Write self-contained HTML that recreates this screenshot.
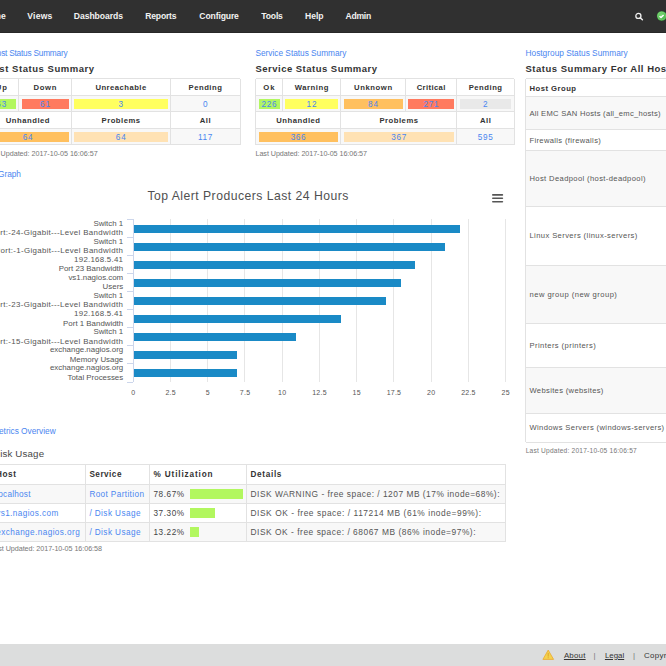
<!DOCTYPE html>
<html><head><meta charset="utf-8"><style>
html,body{margin:0;padding:0;}
body{width:666px;height:666px;overflow:hidden;position:relative;background:#fff;font-family:"Liberation Sans", sans-serif;}
.t{position:absolute;white-space:nowrap;}
.r{position:absolute;}
</style></head><body>
<div class="r" style="left:0.00px;top:0.00px;width:666.00px;height:32.80px;background:#303030;"></div>
<div class="r" style="left:0.00px;top:31.60px;width:666.00px;height:1.20px;background:#282828;"></div>
<div class="t" style="left:-54.10px;width:60px;text-align:right;top:11.89px;font-size:8.6px;line-height:8.6px;color:#f2f2f2;font-weight:bold;letter-spacing:0.159px;margin-right:-0.159px;">Home</div>
<div class="t" style="left:27.30px;top:11.89px;font-size:8.6px;line-height:8.6px;color:#f2f2f2;font-weight:bold;letter-spacing:0.195px;">Views</div>
<div class="t" style="left:73.80px;top:11.89px;font-size:8.6px;line-height:8.6px;color:#f2f2f2;font-weight:bold;letter-spacing:-0.052px;">Dashboards</div>
<div class="t" style="left:145.20px;top:11.89px;font-size:8.6px;line-height:8.6px;color:#f2f2f2;font-weight:bold;letter-spacing:-0.181px;">Reports</div>
<div class="t" style="left:199.30px;top:11.89px;font-size:8.6px;line-height:8.6px;color:#f2f2f2;font-weight:bold;letter-spacing:-0.122px;">Configure</div>
<div class="t" style="left:261.30px;top:11.89px;font-size:8.6px;line-height:8.6px;color:#f2f2f2;font-weight:bold;letter-spacing:-0.170px;">Tools</div>
<div class="t" style="left:305.00px;top:11.89px;font-size:8.6px;line-height:8.6px;color:#f2f2f2;font-weight:bold;letter-spacing:-0.042px;">Help</div>
<div class="t" style="left:345.60px;top:11.89px;font-size:8.6px;line-height:8.6px;color:#f2f2f2;font-weight:bold;letter-spacing:-0.284px;">Admin</div>
<svg class="r" style="left:634px;top:12px" width="10" height="10" viewBox="0 0 10 10"><circle cx="4.4" cy="3.9" r="2.55" fill="none" stroke="#f0f0f0" stroke-width="1.3"/><line x1="6.2" y1="5.8" x2="8.4" y2="7.7" stroke="#f0f0f0" stroke-width="1.5" stroke-linecap="round"/></svg>
<svg class="r" style="left:656px;top:11px" width="11" height="11" viewBox="0 0 11 11"><defs><radialGradient id="gg" cx="0.45" cy="0.4" r="0.6"><stop offset="0" stop-color="#7edc78"/><stop offset="1" stop-color="#3fa83f"/></radialGradient></defs><circle cx="5.7" cy="5" r="4.8" fill="url(#gg)"/><circle cx="5.7" cy="5" r="3.9" fill="none" stroke="#a6eaa0" stroke-width="0.5" opacity="0.7"/><polyline points="3.5,5.2 5,6.5 7.6,4" fill="none" stroke="#fff" stroke-width="1.4"/></svg>
<div class="t" style="left:-52.60px;width:120px;text-align:right;top:48.84px;font-size:8.3px;line-height:8.3px;color:#4a86f0;letter-spacing:-0.224px;margin-right:0.224px;">Host Status Summary</div>
<div class="t" style="left:255.50px;top:48.84px;font-size:8.3px;line-height:8.3px;color:#4a86f0;letter-spacing:-0.014px;">Service Status Summary</div>
<div class="t" style="left:525.50px;top:48.84px;font-size:8.3px;line-height:8.3px;color:#4a86f0;letter-spacing:0.012px;">Hostgroup Status Summary</div>
<div class="t" style="left:-45.30px;width:140px;text-align:right;top:63.92px;font-size:9.5px;line-height:9.5px;color:#333;font-weight:bold;letter-spacing:0.549px;margin-right:-0.549px;">Host Status Summary</div>
<div class="t" style="left:255.50px;top:63.92px;font-size:9.5px;line-height:9.5px;color:#333;font-weight:bold;letter-spacing:0.480px;">Service Status Summary</div>
<div class="t" style="left:525.50px;top:63.92px;font-size:9.5px;line-height:9.5px;color:#333;font-weight:bold;letter-spacing:0.508px;">Status Summary For All Host Groups</div>
<div class="r" style="left:-16.00px;top:95.00px;width:256.10px;height:16.60px;background:#f8f8f8;"></div>
<div class="r" style="left:-16.00px;top:128.20px;width:256.10px;height:16.60px;background:#f8f8f8;"></div>
<div class="r" style="left:-16.00px;top:78.20px;width:256.10px;height:1.00px;background:#e2e2e2;"></div>
<div class="r" style="left:-16.00px;top:94.50px;width:256.10px;height:1.00px;background:#e2e2e2;"></div>
<div class="r" style="left:-16.00px;top:111.10px;width:256.10px;height:1.00px;background:#e2e2e2;"></div>
<div class="r" style="left:-16.00px;top:127.70px;width:256.10px;height:1.00px;background:#e2e2e2;"></div>
<div class="r" style="left:-16.00px;top:144.30px;width:256.10px;height:1.00px;background:#e2e2e2;"></div>
<div class="r" style="left:-16.50px;top:78.70px;width:1.00px;height:66.10px;background:#e2e2e2;"></div>
<div class="r" style="left:239.60px;top:78.70px;width:1.00px;height:66.10px;background:#e2e2e2;"></div>
<div class="t" style="left:-16.00px;width:34.60px;text-align:center;top:84.05px;font-size:7.7px;line-height:7.7px;color:#333;font-weight:bold;letter-spacing:1.025px;text-indent:1.025px;">Up</div>
<div class="r" style="left:18.10px;top:78.70px;width:1.00px;height:32.90px;background:#e2e2e2;"></div>
<div class="t" style="left:18.60px;width:52.70px;text-align:center;top:84.05px;font-size:7.7px;line-height:7.7px;color:#333;font-weight:bold;letter-spacing:0.698px;text-indent:0.698px;">Down</div>
<div class="r" style="left:70.80px;top:78.70px;width:1.00px;height:32.90px;background:#e2e2e2;"></div>
<div class="t" style="left:71.30px;width:99.00px;text-align:center;top:84.05px;font-size:7.7px;line-height:7.7px;color:#333;font-weight:bold;letter-spacing:0.462px;text-indent:0.462px;">Unreachable</div>
<div class="r" style="left:169.80px;top:78.70px;width:1.00px;height:32.90px;background:#e2e2e2;"></div>
<div class="t" style="left:170.30px;width:69.80px;text-align:center;top:84.05px;font-size:7.7px;line-height:7.7px;color:#333;font-weight:bold;letter-spacing:0.505px;text-indent:0.505px;">Pending</div>
<div class="r" style="left:-13.00px;top:98.60px;width:29.00px;height:10.10px;background:#b2f75f;"></div>
<div class="t" style="left:-16.00px;width:34.60px;text-align:center;top:101.13px;font-size:8.2px;line-height:8.2px;color:#4a86f0;letter-spacing:0.911px;text-indent:0.911px;">63</div>
<div class="r" style="left:21.60px;top:98.60px;width:47.10px;height:10.10px;background:#ff7a5f;"></div>
<div class="t" style="left:18.60px;width:52.70px;text-align:center;top:101.13px;font-size:8.2px;line-height:8.2px;color:#4a86f0;letter-spacing:0.911px;text-indent:0.911px;">61</div>
<div class="r" style="left:74.30px;top:98.60px;width:93.40px;height:10.10px;background:#ffff5f;"></div>
<div class="t" style="left:71.30px;width:99.00px;text-align:center;top:101.13px;font-size:8.2px;line-height:8.2px;color:#4a86f0;">3</div>
<div class="t" style="left:170.30px;width:69.80px;text-align:center;top:101.13px;font-size:8.2px;line-height:8.2px;color:#4a86f0;">0</div>
<div class="t" style="left:-16.00px;width:87.30px;text-align:center;top:116.95px;font-size:7.7px;line-height:7.7px;color:#333;font-weight:bold;letter-spacing:0.496px;text-indent:0.496px;">Unhandled</div>
<div class="r" style="left:70.80px;top:111.60px;width:1.00px;height:33.20px;background:#e2e2e2;"></div>
<div class="t" style="left:71.30px;width:99.00px;text-align:center;top:116.95px;font-size:7.7px;line-height:7.7px;color:#333;font-weight:bold;letter-spacing:0.501px;text-indent:0.501px;">Problems</div>
<div class="r" style="left:169.80px;top:111.60px;width:1.00px;height:33.20px;background:#e2e2e2;"></div>
<div class="t" style="left:170.30px;width:69.80px;text-align:center;top:116.95px;font-size:7.7px;line-height:7.7px;color:#333;font-weight:bold;letter-spacing:0.491px;text-indent:0.491px;">All</div>
<div class="r" style="left:-13.00px;top:131.70px;width:81.70px;height:10.20px;background:#ffc05f;"></div>
<div class="t" style="left:-16.00px;width:87.30px;text-align:center;top:134.13px;font-size:8.2px;line-height:8.2px;color:#4a86f0;letter-spacing:0.911px;text-indent:0.911px;">64</div>
<div class="r" style="left:74.30px;top:131.70px;width:93.40px;height:10.20px;background:#ffe2b4;"></div>
<div class="t" style="left:71.30px;width:99.00px;text-align:center;top:134.13px;font-size:8.2px;line-height:8.2px;color:#4a86f0;letter-spacing:0.911px;text-indent:0.911px;">64</div>
<div class="t" style="left:170.30px;width:69.80px;text-align:center;top:134.13px;font-size:8.2px;line-height:8.2px;color:#4a86f0;letter-spacing:0.653px;text-indent:0.653px;">117</div>
<div class="r" style="left:255.50px;top:95.00px;width:258.60px;height:16.60px;background:#f8f8f8;"></div>
<div class="r" style="left:255.50px;top:128.20px;width:258.60px;height:16.60px;background:#f8f8f8;"></div>
<div class="r" style="left:255.50px;top:78.20px;width:258.60px;height:1.00px;background:#e2e2e2;"></div>
<div class="r" style="left:255.50px;top:94.50px;width:258.60px;height:1.00px;background:#e2e2e2;"></div>
<div class="r" style="left:255.50px;top:111.10px;width:258.60px;height:1.00px;background:#e2e2e2;"></div>
<div class="r" style="left:255.50px;top:127.70px;width:258.60px;height:1.00px;background:#e2e2e2;"></div>
<div class="r" style="left:255.50px;top:144.30px;width:258.60px;height:1.00px;background:#e2e2e2;"></div>
<div class="r" style="left:255.00px;top:78.70px;width:1.00px;height:66.10px;background:#e2e2e2;"></div>
<div class="r" style="left:513.60px;top:78.70px;width:1.00px;height:66.10px;background:#e2e2e2;"></div>
<div class="t" style="left:255.50px;width:26.90px;text-align:center;top:84.05px;font-size:7.7px;line-height:7.7px;color:#333;font-weight:bold;letter-spacing:1.027px;text-indent:1.027px;">Ok</div>
<div class="r" style="left:281.90px;top:78.70px;width:1.00px;height:32.90px;background:#e2e2e2;"></div>
<div class="t" style="left:282.40px;width:58.40px;text-align:center;top:84.05px;font-size:7.7px;line-height:7.7px;color:#333;font-weight:bold;letter-spacing:0.508px;text-indent:0.508px;">Warning</div>
<div class="r" style="left:340.30px;top:78.70px;width:1.00px;height:32.90px;background:#e2e2e2;"></div>
<div class="t" style="left:340.80px;width:64.60px;text-align:center;top:84.05px;font-size:7.7px;line-height:7.7px;color:#333;font-weight:bold;letter-spacing:0.577px;text-indent:0.577px;">Unknown</div>
<div class="r" style="left:404.90px;top:78.70px;width:1.00px;height:32.90px;background:#e2e2e2;"></div>
<div class="t" style="left:405.40px;width:51.30px;text-align:center;top:84.05px;font-size:7.7px;line-height:7.7px;color:#333;font-weight:bold;letter-spacing:0.372px;text-indent:0.372px;">Critical</div>
<div class="r" style="left:456.20px;top:78.70px;width:1.00px;height:32.90px;background:#e2e2e2;"></div>
<div class="t" style="left:456.70px;width:57.40px;text-align:center;top:84.05px;font-size:7.7px;line-height:7.7px;color:#333;font-weight:bold;letter-spacing:0.505px;text-indent:0.505px;">Pending</div>
<div class="r" style="left:258.50px;top:98.60px;width:21.30px;height:10.10px;background:#b2f75f;"></div>
<div class="t" style="left:255.50px;width:26.90px;text-align:center;top:101.13px;font-size:8.2px;line-height:8.2px;color:#4a86f0;letter-spacing:0.684px;text-indent:0.684px;">226</div>
<div class="r" style="left:285.40px;top:98.60px;width:52.80px;height:10.10px;background:#ffff5f;"></div>
<div class="t" style="left:282.40px;width:58.40px;text-align:center;top:101.13px;font-size:8.2px;line-height:8.2px;color:#4a86f0;letter-spacing:0.911px;text-indent:0.911px;">12</div>
<div class="r" style="left:343.80px;top:98.60px;width:59.00px;height:10.10px;background:#ffc05f;"></div>
<div class="t" style="left:340.80px;width:64.60px;text-align:center;top:101.13px;font-size:8.2px;line-height:8.2px;color:#4a86f0;letter-spacing:0.911px;text-indent:0.911px;">84</div>
<div class="r" style="left:408.40px;top:98.60px;width:45.70px;height:10.10px;background:#ff7a5f;"></div>
<div class="t" style="left:405.40px;width:51.30px;text-align:center;top:101.13px;font-size:8.2px;line-height:8.2px;color:#4a86f0;letter-spacing:0.684px;text-indent:0.684px;">271</div>
<div class="r" style="left:459.70px;top:98.60px;width:51.80px;height:10.10px;background:#e9e9e9;"></div>
<div class="t" style="left:456.70px;width:57.40px;text-align:center;top:101.13px;font-size:8.2px;line-height:8.2px;color:#4a86f0;">2</div>
<div class="t" style="left:255.50px;width:85.30px;text-align:center;top:116.95px;font-size:7.7px;line-height:7.7px;color:#333;font-weight:bold;letter-spacing:0.496px;text-indent:0.496px;">Unhandled</div>
<div class="r" style="left:340.30px;top:111.60px;width:1.00px;height:33.20px;background:#e2e2e2;"></div>
<div class="t" style="left:340.80px;width:115.90px;text-align:center;top:116.95px;font-size:7.7px;line-height:7.7px;color:#333;font-weight:bold;letter-spacing:0.501px;text-indent:0.501px;">Problems</div>
<div class="r" style="left:456.20px;top:111.60px;width:1.00px;height:33.20px;background:#e2e2e2;"></div>
<div class="t" style="left:456.70px;width:57.40px;text-align:center;top:116.95px;font-size:7.7px;line-height:7.7px;color:#333;font-weight:bold;letter-spacing:0.491px;text-indent:0.491px;">All</div>
<div class="r" style="left:258.50px;top:131.70px;width:79.70px;height:10.20px;background:#ffc05f;"></div>
<div class="t" style="left:255.50px;width:85.30px;text-align:center;top:134.13px;font-size:8.2px;line-height:8.2px;color:#4a86f0;letter-spacing:0.684px;text-indent:0.684px;">366</div>
<div class="r" style="left:343.80px;top:131.70px;width:110.30px;height:10.20px;background:#ffe2b4;"></div>
<div class="t" style="left:340.80px;width:115.90px;text-align:center;top:134.13px;font-size:8.2px;line-height:8.2px;color:#4a86f0;letter-spacing:0.684px;text-indent:0.684px;">367</div>
<div class="t" style="left:456.70px;width:57.40px;text-align:center;top:134.13px;font-size:8.2px;line-height:8.2px;color:#4a86f0;letter-spacing:0.684px;text-indent:0.684px;">595</div>
<div class="t" style="left:-42.40px;width:140px;text-align:right;top:149.78px;font-size:7.2px;line-height:7.2px;color:#777;letter-spacing:-0.031px;margin-right:0.031px;">Last Updated: 2017-10-05 16:06:57</div>
<div class="t" style="left:255.50px;top:149.78px;font-size:7.2px;line-height:7.2px;color:#777;letter-spacing:-0.062px;">Last Updated: 2017-10-05 16:06:57</div>
<div class="r" style="left:525.50px;top:96.30px;width:154.50px;height:33.30px;background:#f8f8f8;"></div>
<div class="r" style="left:525.50px;top:150.20px;width:154.50px;height:55.90px;background:#f8f8f8;"></div>
<div class="r" style="left:525.50px;top:265.00px;width:154.50px;height:58.90px;background:#f8f8f8;"></div>
<div class="r" style="left:525.50px;top:367.00px;width:154.50px;height:46.20px;background:#f8f8f8;"></div>
<div class="r" style="left:525.50px;top:78.20px;width:154.50px;height:1.00px;background:#e2e2e2;"></div>
<div class="r" style="left:525.50px;top:95.80px;width:154.50px;height:1.00px;background:#e2e2e2;"></div>
<div class="r" style="left:525.50px;top:129.10px;width:154.50px;height:1.00px;background:#e2e2e2;"></div>
<div class="r" style="left:525.50px;top:149.70px;width:154.50px;height:1.00px;background:#e2e2e2;"></div>
<div class="r" style="left:525.50px;top:205.60px;width:154.50px;height:1.00px;background:#e2e2e2;"></div>
<div class="r" style="left:525.50px;top:264.50px;width:154.50px;height:1.00px;background:#e2e2e2;"></div>
<div class="r" style="left:525.50px;top:323.40px;width:154.50px;height:1.00px;background:#e2e2e2;"></div>
<div class="r" style="left:525.50px;top:366.50px;width:154.50px;height:1.00px;background:#e2e2e2;"></div>
<div class="r" style="left:525.50px;top:412.70px;width:154.50px;height:1.00px;background:#e2e2e2;"></div>
<div class="r" style="left:525.50px;top:441.80px;width:154.50px;height:1.00px;background:#e2e2e2;"></div>
<div class="r" style="left:525.00px;top:78.70px;width:1.00px;height:363.60px;background:#e2e2e2;"></div>
<div class="t" style="left:529.50px;top:84.66px;font-size:7.7px;line-height:7.7px;color:#333;font-weight:bold;letter-spacing:0.470px;">Host Group</div>
<div class="t" style="left:529.50px;top:109.69px;font-size:7.6px;line-height:7.6px;color:#555;letter-spacing:0.269px;">All EMC SAN Hosts (all_emc_hosts)</div>
<div class="t" style="left:529.50px;top:136.64px;font-size:7.6px;line-height:7.6px;color:#555;letter-spacing:0.337px;">Firewalls (firewalls)</div>
<div class="t" style="left:529.50px;top:174.89px;font-size:7.6px;line-height:7.6px;color:#555;letter-spacing:0.373px;">Host Deadpool (host-deadpool)</div>
<div class="t" style="left:529.50px;top:232.29px;font-size:7.6px;line-height:7.6px;color:#555;letter-spacing:0.399px;">Linux Servers (linux-servers)</div>
<div class="t" style="left:529.50px;top:291.19px;font-size:7.6px;line-height:7.6px;color:#555;letter-spacing:0.465px;">new group (new group)</div>
<div class="t" style="left:529.50px;top:342.19px;font-size:7.6px;line-height:7.6px;color:#555;letter-spacing:0.425px;">Printers (printers)</div>
<div class="t" style="left:529.50px;top:386.84px;font-size:7.6px;line-height:7.6px;color:#555;letter-spacing:0.338px;">Websites (websites)</div>
<div class="t" style="left:529.50px;top:424.49px;font-size:7.6px;line-height:7.6px;color:#555;letter-spacing:0.369px;">Windows Servers (windows-servers)</div>
<div class="t" style="left:525.70px;top:447.59px;font-size:6.6px;line-height:6.6px;color:#777;letter-spacing:0.215px;">Last Updated: 2017-10-05 16:06:57</div>
<div class="t" style="left:-79.00px;width:100px;text-align:right;top:169.84px;font-size:8.3px;line-height:8.3px;color:#4a86f0;">Performance Graph</div>
<div class="t" style="left:147.40px;top:189.83px;font-size:12.2px;line-height:12.2px;color:#505050;letter-spacing:0.480px;">Top Alert Producers Last 24 Hours</div>
<svg class="r" style="left:490px;top:192px" width="16" height="13" viewBox="0 0 16 13"><g stroke="#555" stroke-width="1.6" stroke-linecap="round"><line x1="2.8" y1="2.9" x2="12.4" y2="2.9"/><line x1="2.8" y1="6.3" x2="12.4" y2="6.3"/><line x1="2.8" y1="9.8" x2="12.4" y2="9.8"/></g></svg>
<div class="r" style="left:170.03px;top:219.00px;width:1.00px;height:163.00px;background:#e6e6e6;"></div>
<div class="r" style="left:207.25px;top:219.00px;width:1.00px;height:163.00px;background:#e6e6e6;"></div>
<div class="r" style="left:244.48px;top:219.00px;width:1.00px;height:163.00px;background:#e6e6e6;"></div>
<div class="r" style="left:281.70px;top:219.00px;width:1.00px;height:163.00px;background:#e6e6e6;"></div>
<div class="r" style="left:318.93px;top:219.00px;width:1.00px;height:163.00px;background:#e6e6e6;"></div>
<div class="r" style="left:356.15px;top:219.00px;width:1.00px;height:163.00px;background:#e6e6e6;"></div>
<div class="r" style="left:393.38px;top:219.00px;width:1.00px;height:163.00px;background:#e6e6e6;"></div>
<div class="r" style="left:430.60px;top:219.00px;width:1.00px;height:163.00px;background:#e6e6e6;"></div>
<div class="r" style="left:467.83px;top:219.00px;width:1.00px;height:163.00px;background:#e6e6e6;"></div>
<div class="r" style="left:505.05px;top:219.00px;width:1.00px;height:163.00px;background:#e6e6e6;"></div>
<div class="r" style="left:132.80px;top:219.00px;width:1.00px;height:163.00px;background:#ccd6eb;"></div>
<div class="r" style="left:127.30px;top:219.00px;width:6.00px;height:1.00px;background:#ccd6eb;"></div>
<div class="r" style="left:127.30px;top:237.06px;width:6.00px;height:1.00px;background:#ccd6eb;"></div>
<div class="r" style="left:127.30px;top:255.12px;width:6.00px;height:1.00px;background:#ccd6eb;"></div>
<div class="r" style="left:127.30px;top:273.18px;width:6.00px;height:1.00px;background:#ccd6eb;"></div>
<div class="r" style="left:127.30px;top:291.24px;width:6.00px;height:1.00px;background:#ccd6eb;"></div>
<div class="r" style="left:127.30px;top:309.30px;width:6.00px;height:1.00px;background:#ccd6eb;"></div>
<div class="r" style="left:127.30px;top:327.36px;width:6.00px;height:1.00px;background:#ccd6eb;"></div>
<div class="r" style="left:127.30px;top:345.42px;width:6.00px;height:1.00px;background:#ccd6eb;"></div>
<div class="r" style="left:127.30px;top:363.48px;width:6.00px;height:1.00px;background:#ccd6eb;"></div>
<div class="r" style="left:127.30px;top:381.54px;width:6.00px;height:1.00px;background:#ccd6eb;"></div>
<div class="r" style="left:133.80px;top:224.53px;width:326.28px;height:8.00px;background:#1a8ac6;"></div>
<div class="t" style="left:-76.80px;width:200px;text-align:right;top:219.91px;font-size:7.9px;line-height:7.9px;color:#555;">Switch 1</div>
<div class="t" style="left:-76.80px;width:200px;text-align:right;top:229.22px;font-size:7.9px;line-height:7.9px;color:#555;letter-spacing:0.349px;margin-right:-0.349px;">Port:-24-Gigabit---Level Bandwidth</div>
<div class="r" style="left:133.80px;top:242.59px;width:311.39px;height:8.00px;background:#1a8ac6;"></div>
<div class="t" style="left:-76.80px;width:200px;text-align:right;top:237.97px;font-size:7.9px;line-height:7.9px;color:#555;">Switch 1</div>
<div class="t" style="left:-76.80px;width:200px;text-align:right;top:247.28px;font-size:7.9px;line-height:7.9px;color:#555;letter-spacing:0.340px;margin-right:-0.340px;">Port:-1-Gigabit---Level Bandwidth</div>
<div class="r" style="left:133.80px;top:260.65px;width:281.61px;height:8.00px;background:#1a8ac6;"></div>
<div class="t" style="left:-76.80px;width:200px;text-align:right;top:256.04px;font-size:7.9px;line-height:7.9px;color:#555;letter-spacing:0.251px;margin-right:-0.251px;">192.168.5.41</div>
<div class="t" style="left:-76.80px;width:200px;text-align:right;top:265.33px;font-size:7.9px;line-height:7.9px;color:#555;">Port 23 Bandwidth</div>
<div class="r" style="left:133.80px;top:278.71px;width:266.72px;height:8.00px;background:#1a8ac6;"></div>
<div class="t" style="left:-76.80px;width:200px;text-align:right;top:274.10px;font-size:7.9px;line-height:7.9px;color:#555;">vs1.nagios.com</div>
<div class="t" style="left:-76.80px;width:200px;text-align:right;top:283.39px;font-size:7.9px;line-height:7.9px;color:#555;">Users</div>
<div class="r" style="left:133.80px;top:296.77px;width:251.83px;height:8.00px;background:#1a8ac6;"></div>
<div class="t" style="left:-76.80px;width:200px;text-align:right;top:292.16px;font-size:7.9px;line-height:7.9px;color:#555;">Switch 1</div>
<div class="t" style="left:-76.80px;width:200px;text-align:right;top:301.45px;font-size:7.9px;line-height:7.9px;color:#555;letter-spacing:0.349px;margin-right:-0.349px;">Port:-23-Gigabit---Level Bandwidth</div>
<div class="r" style="left:133.80px;top:314.83px;width:207.16px;height:8.00px;background:#1a8ac6;"></div>
<div class="t" style="left:-76.80px;width:200px;text-align:right;top:310.22px;font-size:7.9px;line-height:7.9px;color:#555;letter-spacing:0.251px;margin-right:-0.251px;">192.168.5.41</div>
<div class="t" style="left:-76.80px;width:200px;text-align:right;top:319.51px;font-size:7.9px;line-height:7.9px;color:#555;">Port 1 Bandwidth</div>
<div class="r" style="left:133.80px;top:332.89px;width:162.49px;height:8.00px;background:#1a8ac6;"></div>
<div class="t" style="left:-76.80px;width:200px;text-align:right;top:328.28px;font-size:7.9px;line-height:7.9px;color:#555;">Switch 1</div>
<div class="t" style="left:-76.80px;width:200px;text-align:right;top:337.57px;font-size:7.9px;line-height:7.9px;color:#555;letter-spacing:0.349px;margin-right:-0.349px;">Port:-15-Gigabit---Level Bandwidth</div>
<div class="r" style="left:133.80px;top:350.95px;width:102.93px;height:8.00px;background:#1a8ac6;"></div>
<div class="t" style="left:-76.80px;width:200px;text-align:right;top:346.33px;font-size:7.9px;line-height:7.9px;color:#555;">exchange.nagios.org</div>
<div class="t" style="left:-76.80px;width:200px;text-align:right;top:355.63px;font-size:7.9px;line-height:7.9px;color:#555;">Memory Usage</div>
<div class="r" style="left:133.80px;top:369.01px;width:102.93px;height:8.00px;background:#1a8ac6;"></div>
<div class="t" style="left:-76.80px;width:200px;text-align:right;top:364.40px;font-size:7.9px;line-height:7.9px;color:#555;">exchange.nagios.org</div>
<div class="t" style="left:-76.80px;width:200px;text-align:right;top:373.69px;font-size:7.9px;line-height:7.9px;color:#555;">Total Processes</div>
<div class="t" style="left:113.30px;width:40.00px;text-align:center;top:389.25px;font-size:7px;line-height:7px;color:#555;">0</div>
<div class="t" style="left:150.53px;width:40.00px;text-align:center;top:389.25px;font-size:7px;line-height:7px;color:#555;letter-spacing:0.243px;text-indent:0.243px;">2.5</div>
<div class="t" style="left:187.75px;width:40.00px;text-align:center;top:389.25px;font-size:7px;line-height:7px;color:#555;">5</div>
<div class="t" style="left:224.98px;width:40.00px;text-align:center;top:389.25px;font-size:7px;line-height:7px;color:#555;letter-spacing:0.243px;text-indent:0.243px;">7.5</div>
<div class="t" style="left:262.20px;width:40.00px;text-align:center;top:389.25px;font-size:7px;line-height:7px;color:#555;letter-spacing:0.390px;text-indent:0.390px;">10</div>
<div class="t" style="left:299.43px;width:40.00px;text-align:center;top:389.25px;font-size:7px;line-height:7px;color:#555;letter-spacing:0.227px;text-indent:0.227px;">12.5</div>
<div class="t" style="left:336.65px;width:40.00px;text-align:center;top:389.25px;font-size:7px;line-height:7px;color:#555;letter-spacing:0.390px;text-indent:0.390px;">15</div>
<div class="t" style="left:373.88px;width:40.00px;text-align:center;top:389.25px;font-size:7px;line-height:7px;color:#555;letter-spacing:0.227px;text-indent:0.227px;">17.5</div>
<div class="t" style="left:411.10px;width:40.00px;text-align:center;top:389.25px;font-size:7px;line-height:7px;color:#555;letter-spacing:0.390px;text-indent:0.390px;">20</div>
<div class="t" style="left:448.33px;width:40.00px;text-align:center;top:389.25px;font-size:7px;line-height:7px;color:#555;letter-spacing:0.227px;text-indent:0.227px;">22.5</div>
<div class="t" style="left:485.55px;width:40.00px;text-align:center;top:389.25px;font-size:7px;line-height:7px;color:#555;letter-spacing:0.390px;text-indent:0.390px;">25</div>
<div class="t" style="left:-44.30px;width:100px;text-align:right;top:427.44px;font-size:8.3px;line-height:8.3px;color:#4a86f0;">Metrics Overview</div>
<div class="t" style="left:-55.80px;width:100px;text-align:right;top:449.25px;font-size:9.7px;line-height:9.7px;color:#484848;letter-spacing:0.163px;margin-right:-0.163px;">Disk Usage</div>
<div class="r" style="left:-20.00px;top:484.20px;width:525.70px;height:19.30px;background:#f8f8f8;"></div>
<div class="r" style="left:-20.00px;top:522.40px;width:525.70px;height:18.90px;background:#f8f8f8;"></div>
<div class="r" style="left:-20.00px;top:464.00px;width:525.70px;height:1.00px;background:#e2e2e2;"></div>
<div class="r" style="left:-20.00px;top:483.70px;width:525.70px;height:1.00px;background:#e2e2e2;"></div>
<div class="r" style="left:-20.00px;top:503.00px;width:525.70px;height:1.00px;background:#e2e2e2;"></div>
<div class="r" style="left:-20.00px;top:521.90px;width:525.70px;height:1.00px;background:#e2e2e2;"></div>
<div class="r" style="left:-20.00px;top:540.80px;width:525.70px;height:1.00px;background:#e2e2e2;"></div>
<div class="r" style="left:84.80px;top:464.50px;width:1.00px;height:76.80px;background:#e2e2e2;"></div>
<div class="r" style="left:149.20px;top:464.50px;width:1.00px;height:76.80px;background:#e2e2e2;"></div>
<div class="r" style="left:245.70px;top:464.50px;width:1.00px;height:76.80px;background:#e2e2e2;"></div>
<div class="r" style="left:505.20px;top:464.50px;width:1.00px;height:76.80px;background:#e2e2e2;"></div>
<div class="t" style="left:-43.40px;width:60px;text-align:right;top:471.43px;font-size:8.2px;line-height:8.2px;color:#333;font-weight:bold;letter-spacing:0.607px;margin-right:-0.607px;">Host</div>
<div class="t" style="left:89.40px;top:471.43px;font-size:8.2px;line-height:8.2px;color:#333;font-weight:bold;letter-spacing:0.486px;">Service</div>
<div class="t" style="left:153.50px;top:471.43px;font-size:8.2px;line-height:8.2px;color:#333;font-weight:bold;letter-spacing:0.861px;">% Utilization</div>
<div class="t" style="left:250.50px;top:471.43px;font-size:8.2px;line-height:8.2px;color:#333;font-weight:bold;letter-spacing:0.671px;">Details</div>
<div class="t" style="left:-3.80px;top:491.08px;font-size:8.2px;line-height:8.2px;color:#4a86f0;letter-spacing:0.246px;">localhost</div>
<div class="t" style="left:89.40px;top:491.08px;font-size:8.2px;line-height:8.2px;color:#4a86f0;letter-spacing:0.382px;">Root Partition</div>
<div class="t" style="left:153.50px;top:491.08px;font-size:8.2px;line-height:8.2px;color:#444;letter-spacing:0.556px;">78.67%</div>
<div class="r" style="left:190.30px;top:488.85px;width:52.70px;height:10.00px;background:#b2f75f;"></div>
<div class="t" style="left:250.50px;top:490.11px;font-size:8.4px;line-height:8.4px;color:#555;letter-spacing:0.502px;">DISK WARNING - free space: / 1207 MB (17% inode=68%):</div>
<div class="t" style="left:-3.80px;top:510.18px;font-size:8.2px;line-height:8.2px;color:#4a86f0;letter-spacing:0.393px;">vs1.nagios.com</div>
<div class="t" style="left:89.40px;top:510.18px;font-size:8.2px;line-height:8.2px;color:#4a86f0;letter-spacing:0.422px;">/ Disk Usage</div>
<div class="t" style="left:153.50px;top:510.18px;font-size:8.2px;line-height:8.2px;color:#444;letter-spacing:0.556px;">37.30%</div>
<div class="r" style="left:190.30px;top:507.95px;width:24.80px;height:10.00px;background:#b2f75f;"></div>
<div class="t" style="left:250.50px;top:509.21px;font-size:8.4px;line-height:8.4px;color:#555;letter-spacing:0.551px;">DISK OK - free space: / 117214 MB (61% inode=99%):</div>
<div class="t" style="left:-3.80px;top:529.08px;font-size:8.2px;line-height:8.2px;color:#4a86f0;letter-spacing:0.415px;">exchange.nagios.org</div>
<div class="t" style="left:89.40px;top:529.08px;font-size:8.2px;line-height:8.2px;color:#4a86f0;letter-spacing:0.422px;">/ Disk Usage</div>
<div class="t" style="left:153.50px;top:529.08px;font-size:8.2px;line-height:8.2px;color:#444;letter-spacing:0.556px;">13.22%</div>
<div class="r" style="left:190.30px;top:526.85px;width:8.60px;height:10.00px;background:#b2f75f;"></div>
<div class="t" style="left:250.50px;top:528.11px;font-size:8.4px;line-height:8.4px;color:#555;letter-spacing:0.532px;">DISK OK - free space: / 68067 MB (86% inode=97%):</div>
<div class="t" style="left:-38.10px;width:140px;text-align:right;top:545.38px;font-size:7.2px;line-height:7.2px;color:#777;letter-spacing:-0.062px;margin-right:0.062px;">Last Updated: 2017-10-05 16:06:58</div>
<div class="r" style="left:0.00px;top:643.50px;width:666.00px;height:22.50px;background:#dcdddd;"></div>
<svg class="r" style="left:542px;top:649px" width="13" height="11" viewBox="0 0 13 11"><polygon points="6.2,1.1 11.6,10.4 0.9,10.4" fill="#f4d24e" stroke="#eba830" stroke-width="0.8" stroke-linejoin="round"/><rect x="5.7" y="4" width="1" height="3.6" fill="#dc9a20" opacity="0.8"/><rect x="5.7" y="8.3" width="1" height="0.9" fill="#dc9a20" opacity="0.8"/></svg>
<div class="t" style="left:563.90px;top:651.58px;font-size:7.9px;line-height:7.9px;color:#333;letter-spacing:0.219px;text-decoration:underline;">About</div>
<div class="t" style="left:593.50px;top:651.58px;font-size:7.9px;line-height:7.9px;color:#777;">|</div>
<div class="t" style="left:604.90px;top:651.58px;font-size:7.9px;line-height:7.9px;color:#333;text-decoration:underline;">Legal</div>
<div class="t" style="left:633.00px;top:651.58px;font-size:7.9px;line-height:7.9px;color:#777;">|</div>
<div class="t" style="left:643.90px;top:651.58px;font-size:7.9px;line-height:7.9px;color:#333;letter-spacing:0.385px;">Copyright &copy; 2008-2017 Nagios Enterprises, LLC</div>
</body></html>
